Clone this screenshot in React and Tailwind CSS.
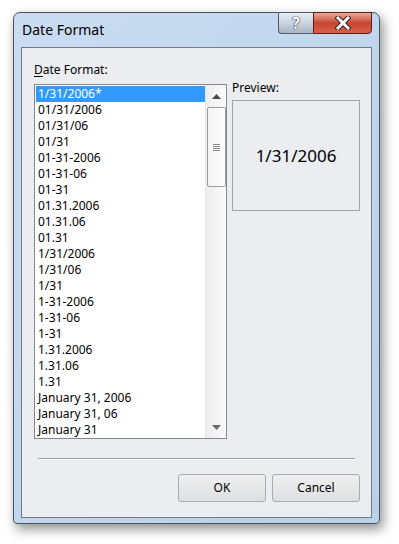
const FORMATS = [
  '1/31/2006*',
  '01/31/2006',
  '01/31/06',
  '01/31',
  '01-31-2006',
  '01-31-06',
  '01-31',
  '01.31.2006',
  '01.31.06',
  '01.31',
  '1/31/2006',
  '1/31/06',
  '1/31',
  '1-31-2006',
  '1-31-06',
  '1-31',
  '1.31.2006',
  '1.31.06',
  '1.31',
  'January 31, 2006',
  'January 31, 06',
  'January 31',
];

function TitleButtons() {
  return (
    <div className="ml-auto flex h-[22px] -mt-px">
      {/* help */}
      <div className="w-[35px] h-full flex items-center justify-center border border-[#4f5b69] border-r-0 rounded-bl-[4px] bg-gradient-to-b from-[#e6ecf3] via-[#c9d3de] to-[#a9b6c5]">
        <span className="text-[16px] leading-none font-bold text-white [text-shadow:0_0_1px_#2d3640,0_0_1px_#2d3640,0_0_1px_#2d3640]">?</span>
      </div>
      {/* close */}
      <div className="w-[59px] h-full flex items-center justify-center border border-[#5b1a12] rounded-br-[4px] bg-gradient-to-b from-[#e9a999] via-[#c8452f] to-[#d9604a]">
        <svg width="16" height="14" viewBox="0 0 16 14">
          <path d="M3 2 L13 12 M13 2 L3 12" stroke="#3a1a16" strokeWidth="5" strokeLinecap="square" />
          <path d="M3 2 L13 12 M13 2 L3 12" stroke="#ffffff" strokeWidth="3" strokeLinecap="square" />
        </svg>
      </div>
    </div>
  );
}

function Scrollbar() {
  return (
    <div className="w-[21px] h-full flex flex-col items-center bg-gradient-to-r from-[#ededed] to-[#fbfbfb] border-l border-[#e6e6e6]">
      <div className="h-[22px] w-full flex items-center justify-center">
        <svg width="9" height="5" viewBox="0 0 9 5"><path d="M0 5 L4.5 0 L9 5 Z" fill="#4a4a4a" /></svg>
      </div>
      <div className="w-[19px] h-[80px] border border-[#9c9c9c] rounded-[2px] bg-gradient-to-r from-[#f4f4f4] to-[#fdfdfd] flex items-center justify-center">
        <div className="flex flex-col gap-[1px]">
          <div className="w-[7px] h-px bg-[#8a8a8a]" />
          <div className="w-[7px] h-px bg-[#8a8a8a]" />
          <div className="w-[7px] h-px bg-[#8a8a8a]" />
          <div className="w-[7px] h-px bg-[#8a8a8a]" />
        </div>
      </div>
      <div className="flex-1" />
      <div className="h-[22px] w-full flex items-center justify-center">
        <svg width="9" height="5" viewBox="0 0 9 5"><path d="M0 0 L9 0 L4.5 5 Z" fill="#6a6a6a" /></svg>
      </div>
    </div>
  );
}

export default function App() {
  return (
    <div className="w-[399px] h-[544px] bg-white pt-[12px] pl-[13px] font-['Noto_Sans',sans-serif] text-black">
      <div className="w-[367px] h-[512px] flex flex-col px-[7px] pb-[5px] border border-[#4a525c] rounded-t-[7px] rounded-b-[4px] bg-gradient-to-br from-[#cadcf1] to-[#b9d0ea] shadow-[3px_5px_12px_rgba(0,0,0,0.45)]">
        {/* title bar */}
        <div className="h-[34px] flex items-start">
          <div className="pl-[1px] pt-[7px] text-[14px] leading-[20px] text-black">Date Format</div>
          <TitleButtons />
        </div>

        {/* client area */}
        <div className="flex-1 flex flex-col border border-[#6f7c89] bg-[#ebedf0]">
          <div className="pt-[14px] pl-[12px] text-[12px] leading-[16px]">
            <span className="underline underline-offset-2">D</span>ate Format:
          </div>

          <div className="mt-[6px] pl-[12px] flex items-start">
            <div className="w-[193px] h-[355px] border border-[#828790] bg-white flex">
              <div className="flex-1 pl-px pt-px text-[12px] leading-[16px]">
                {FORMATS.map((f, i) => (
                  <div key={f + i} className={i === 0 ? 'h-[16px] pl-[2px] bg-[#3399ff] text-white' : 'h-[16px] pl-[2px]'}>
                    {f}
                  </div>
                ))}
              </div>
              <Scrollbar />
            </div>

            <div className="ml-[5px] -mt-[4px] flex flex-col">
              <div className="text-[12px] leading-[16px]">Preview:</div>
              <div className="mt-[4px] w-[128px] h-[111px] border border-[#a2a4a8] flex items-center justify-center text-[17px]">
                1/31/2006
              </div>
            </div>
          </div>

          <div className="mt-[19px] mx-[16px] h-px bg-[#a0a0a0] shadow-[0_1px_0_#ffffff]" />

          <div className="mt-[15px] pr-[11px] flex justify-end gap-[6px] text-[12px]">
            <button className="w-[88px] h-[28px] border border-[#a9abae] rounded-[3px] bg-gradient-to-b from-[#f0f0f0] to-[#dedfe1]">OK</button>
            <button className="w-[88px] h-[28px] border border-[#a9abae] rounded-[3px] bg-gradient-to-b from-[#f0f0f0] to-[#dedfe1]">Cancel</button>
          </div>
        </div>
      </div>
    </div>
  );
}
